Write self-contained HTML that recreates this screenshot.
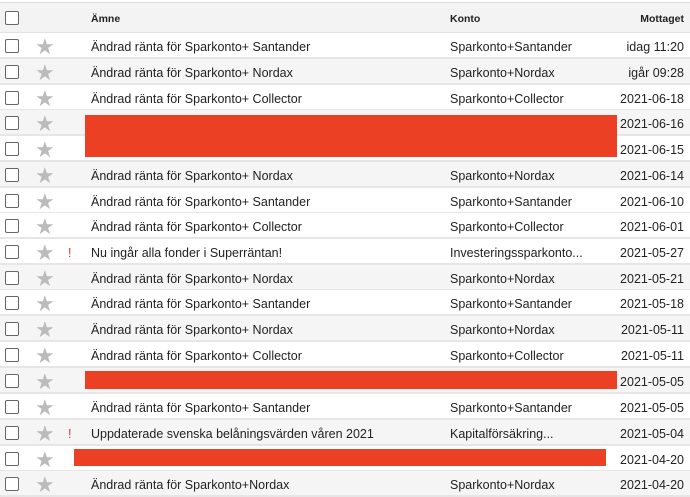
<!DOCTYPE html><html><head><style>
body{margin:0;width:690px;height:496px;overflow:hidden;background:#fff;font-family:"Liberation Sans",sans-serif;font-size:12.5px;color:#222;position:relative}
.hdr{position:absolute;left:0;top:2px;width:690px;height:29px;background:#f3f3f3;border-top:1px solid #ddd;border-bottom:2px solid #e2e2e2;font-size:10.5px;font-weight:bold}
.row{position:absolute;left:0;width:690px;height:24px;border-bottom:2px solid #e6e6e6}
.cb{position:absolute;left:5px;top:6px;width:12px;height:12px;border:1.5px solid #666;border-radius:2px;background:#fff}
.st{position:absolute;left:35px;top:3px;font-size:22px;color:#bbb;line-height:22px}
.s{position:absolute;left:91px;top:7px}
.k{position:absolute;left:450px;top:7px}
.d{position:absolute;right:6px;top:7px}
.ex{position:absolute;left:68px;top:7px;color:#d33}
.red{position:absolute;background:#ec4025}
</style></head><body>
<div class="hdr"><div class="cb" style="top:8px"></div><div class="s" style="top:10px">Ämne</div><div class="k" style="top:10px">Konto</div><div class="d" style="top:10px">Mottaget</div></div>
<div class="row" style="top:33px;background:#fff"><div class="cb"></div><div class="st">★</div><div class="s">Ändrad ränta för Sparkonto+ Santander</div><div class="k">Sparkonto+Santander</div><div class="d">idag 11:20</div></div>
<div class="row" style="top:59px;background:#f5f5f5"><div class="cb"></div><div class="st">★</div><div class="s">Ändrad ränta för Sparkonto+ Nordax</div><div class="k">Sparkonto+Nordax</div><div class="d">igår 09:28</div></div>
<div class="row" style="top:85px;background:#fff"><div class="cb"></div><div class="st">★</div><div class="s">Ändrad ränta för Sparkonto+ Collector</div><div class="k">Sparkonto+Collector</div><div class="d">2021-06-18</div></div>
<div class="row" style="top:110px;background:#f5f5f5"><div class="cb"></div><div class="st">★</div><div class="d">2021-06-16</div></div>
<div class="row" style="top:136px;background:#fff"><div class="cb"></div><div class="st">★</div><div class="d">2021-06-15</div></div>
<div class="row" style="top:162px;background:#f5f5f5"><div class="cb"></div><div class="st">★</div><div class="s">Ändrad ränta för Sparkonto+ Nordax</div><div class="k">Sparkonto+Nordax</div><div class="d">2021-06-14</div></div>
<div class="row" style="top:188px;background:#fff"><div class="cb"></div><div class="st">★</div><div class="s">Ändrad ränta för Sparkonto+ Santander</div><div class="k">Sparkonto+Santander</div><div class="d">2021-06-10</div></div>
<div class="row" style="top:213px;background:#fff"><div class="cb"></div><div class="st">★</div><div class="s">Ändrad ränta för Sparkonto+ Collector</div><div class="k">Sparkonto+Collector</div><div class="d">2021-06-01</div></div>
<div class="row" style="top:239px;background:#fff"><div class="cb"></div><div class="st">★</div><div class="ex">!</div><div class="s">Nu ingår alla fonder i Superräntan!</div><div class="k">Investeringssparkonto...</div><div class="d">2021-05-27</div></div>
<div class="row" style="top:265px;background:#f5f5f5"><div class="cb"></div><div class="st">★</div><div class="s">Ändrad ränta för Sparkonto+ Nordax</div><div class="k">Sparkonto+Nordax</div><div class="d">2021-05-21</div></div>
<div class="row" style="top:290px;background:#fff"><div class="cb"></div><div class="st">★</div><div class="s">Ändrad ränta för Sparkonto+ Santander</div><div class="k">Sparkonto+Santander</div><div class="d">2021-05-18</div></div>
<div class="row" style="top:316px;background:#f5f5f5"><div class="cb"></div><div class="st">★</div><div class="s">Ändrad ränta för Sparkonto+ Nordax</div><div class="k">Sparkonto+Nordax</div><div class="d">2021-05-11</div></div>
<div class="row" style="top:342px;background:#fff"><div class="cb"></div><div class="st">★</div><div class="s">Ändrad ränta för Sparkonto+ Collector</div><div class="k">Sparkonto+Collector</div><div class="d">2021-05-11</div></div>
<div class="row" style="top:368px;background:#f5f5f5"><div class="cb"></div><div class="st">★</div><div class="d">2021-05-05</div></div>
<div class="row" style="top:394px;background:#fff"><div class="cb"></div><div class="st">★</div><div class="s">Ändrad ränta för Sparkonto+ Santander</div><div class="k">Sparkonto+Santander</div><div class="d">2021-05-05</div></div>
<div class="row" style="top:420px;background:#f5f5f5"><div class="cb"></div><div class="st">★</div><div class="ex">!</div><div class="s">Uppdaterade svenska belåningsvärden våren 2021</div><div class="k">Kapitalförsäkring...</div><div class="d">2021-05-04</div></div>
<div class="row" style="top:446px;background:#fff"><div class="cb"></div><div class="st">★</div><div class="d">2021-04-20</div></div>
<div class="row" style="top:471px;background:#f5f5f5"><div class="cb"></div><div class="st">★</div><div class="s">Ändrad ränta för Sparkonto+Nordax</div><div class="k">Sparkonto+Nordax</div><div class="d">2021-04-20</div></div>
<div class="red" style="left:85px;top:115px;width:532px;height:42px"></div>
<div class="red" style="left:85px;top:371px;width:532px;height:18px"></div>
<div class="red" style="left:74px;top:449px;width:532px;height:17px"></div>
</body></html>
